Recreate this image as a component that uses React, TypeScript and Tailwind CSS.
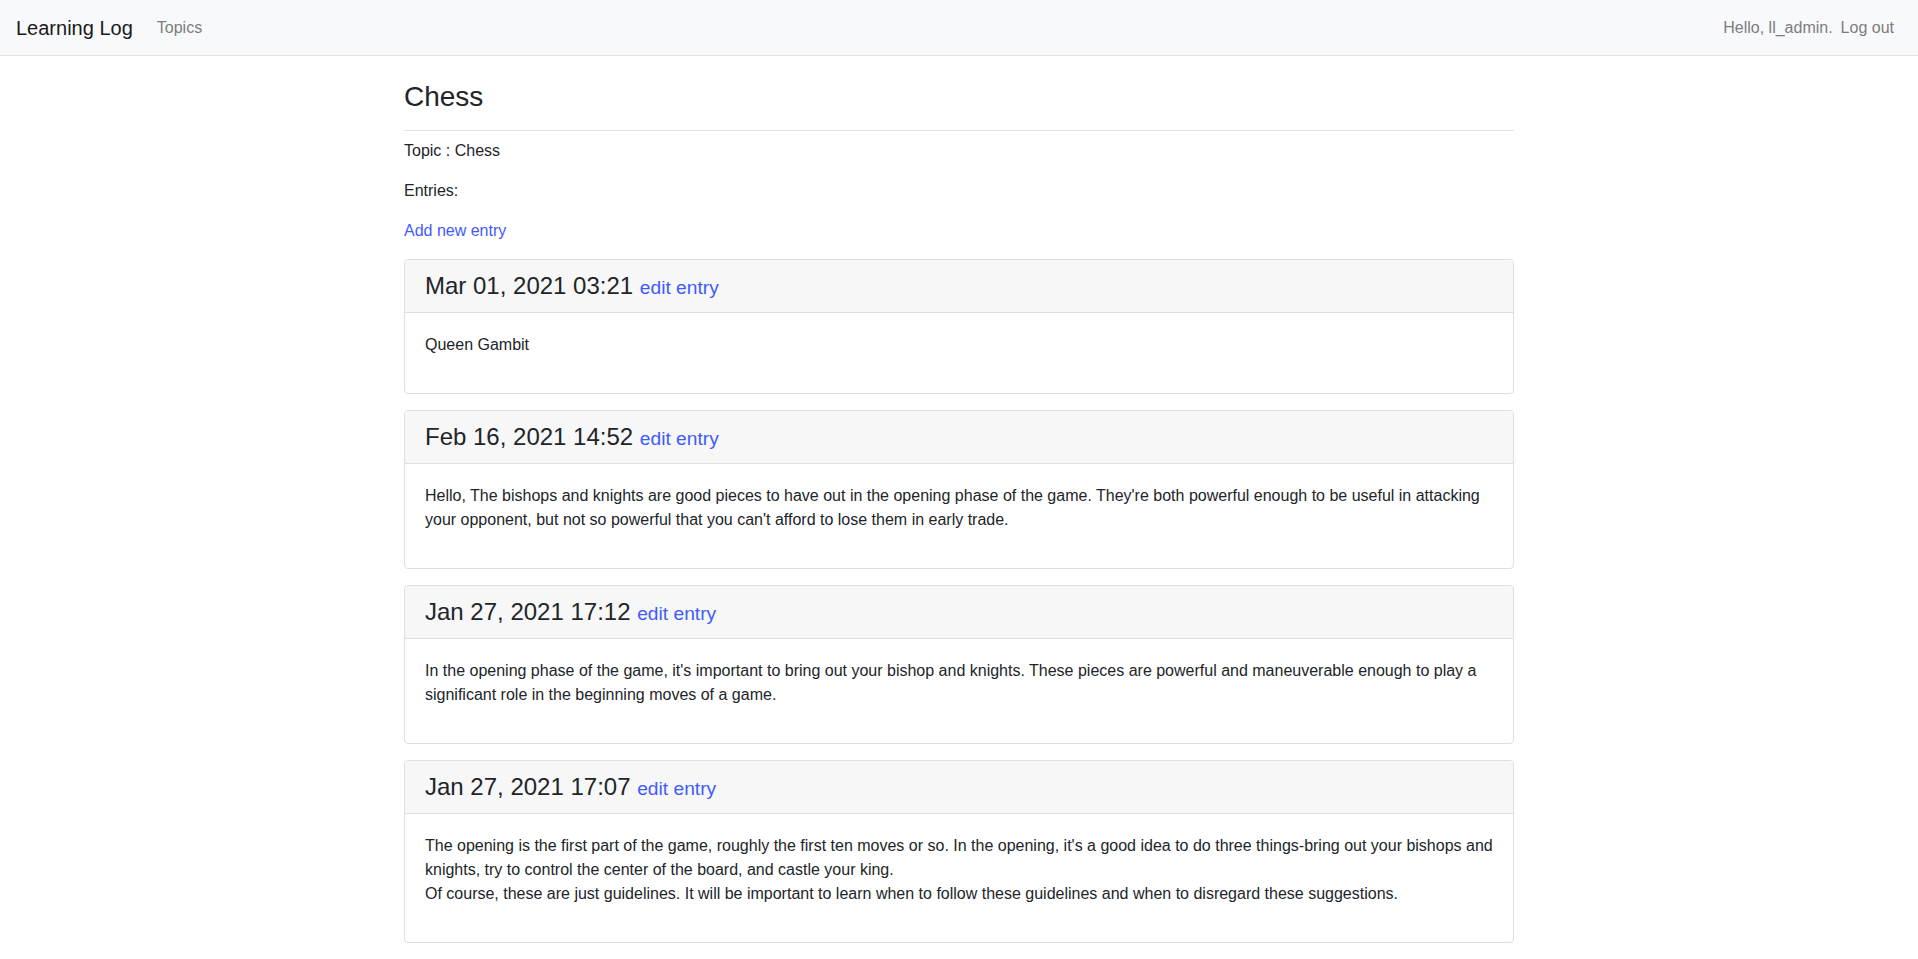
import React from 'react';

interface Entry {
  date: string;
  paragraphs: string[][];
}

const ENTRIES: Entry[] = [
  { date: 'Mar 01, 2021 03:21', paragraphs: [['Queen Gambit']] },
  {
    date: 'Feb 16, 2021 14:52',
    paragraphs: [
      [
        "Hello, The bishops and knights are good pieces to have out in the opening phase of the game. They're both powerful enough to be useful in attacking your opponent, but not so powerful that you can't afford to lose them in early trade.",
      ],
    ],
  },
  {
    date: 'Jan 27, 2021 17:12',
    paragraphs: [
      [
        "In the opening phase of the game, it's important to bring out your bishop and knights. These pieces are powerful and maneuverable enough to play a significant role in the beginning moves of a game.",
      ],
    ],
  },
  {
    date: 'Jan 27, 2021 17:07',
    paragraphs: [
      [
        "The opening is the first part of the game, roughly the first ten moves or so. In the opening, it's a good idea to do three things-bring out your bishops and knights, try to control the center of the board, and castle your king.",
        'Of course, these are just guidelines. It will be important to learn when to follow these guidelines and when to disregard these suggestions.',
      ],
    ],
  },
];

const EntryCard: React.FC<{ entry: Entry }> = ({ entry }) => (
  <div className="mb-4 rounded-[4px] border border-[#dfdfdf] bg-white">
    <h4 className="border-b border-[#dfdfdf] bg-[#f7f7f7] px-5 py-3 text-[24px] leading-[28px] text-[#212529] rounded-t-[3px]">
      {entry.date}{' '}
      <small className="text-[19.2px] leading-none">
        <a href="#" className="text-[#3f5bfb]">edit entry</a>
      </small>
    </h4>
    <div className="p-5">
      {entry.paragraphs.map((lines, i) => (
        <p key={i} className="mb-4">
          {lines.map((line, j) => (
            <React.Fragment key={j}>
              {j > 0 && <br />}
              {line}
            </React.Fragment>
          ))}
        </p>
      ))}
    </div>
  </div>
);

export default function App() {
  return (
    <div className="min-h-screen bg-white text-[16px] leading-[24px] text-[#212529] font-['Liberation_Sans',Arial,sans-serif]">
      {/* Navbar */}
      <nav className="flex h-[56px] items-center justify-between border-b border-[#dee2e6] bg-[#f8f9fa] px-4">
        <div className="flex items-center">
          <a href="#" className="mr-4 text-[20px] leading-[30px] text-[#1a1a1a]">Learning Log</a>
          <a href="#" className="px-2 text-[#7c7d7e]">Topics</a>
        </div>
        <div className="flex items-center">
          <span className="text-[#7c7d7e]">Hello, ll_admin.</span>
          <a href="#" className="px-2 text-[#7c7d7e]">Log out</a>
        </div>
      </nav>

      <main className="mx-auto mt-6 w-[1140px] px-[15px]">
        <div className="mb-2 border-b border-[#dee2e6] pb-2">
          <h3 className="mb-2 text-[28px] leading-[33.6px] font-normal">Chess</h3>
        </div>
        <div>
          <p className="mb-4">Topic : Chess</p>
          <p className="mb-4">Entries:</p>
          <p className="mb-4">
            <a href="#" className="text-[#3f5bfb]">Add new entry</a>
          </p>
          {ENTRIES.map(e => (
            <EntryCard key={e.date} entry={e} />
          ))}
        </div>
      </main>
    </div>
  );
}
